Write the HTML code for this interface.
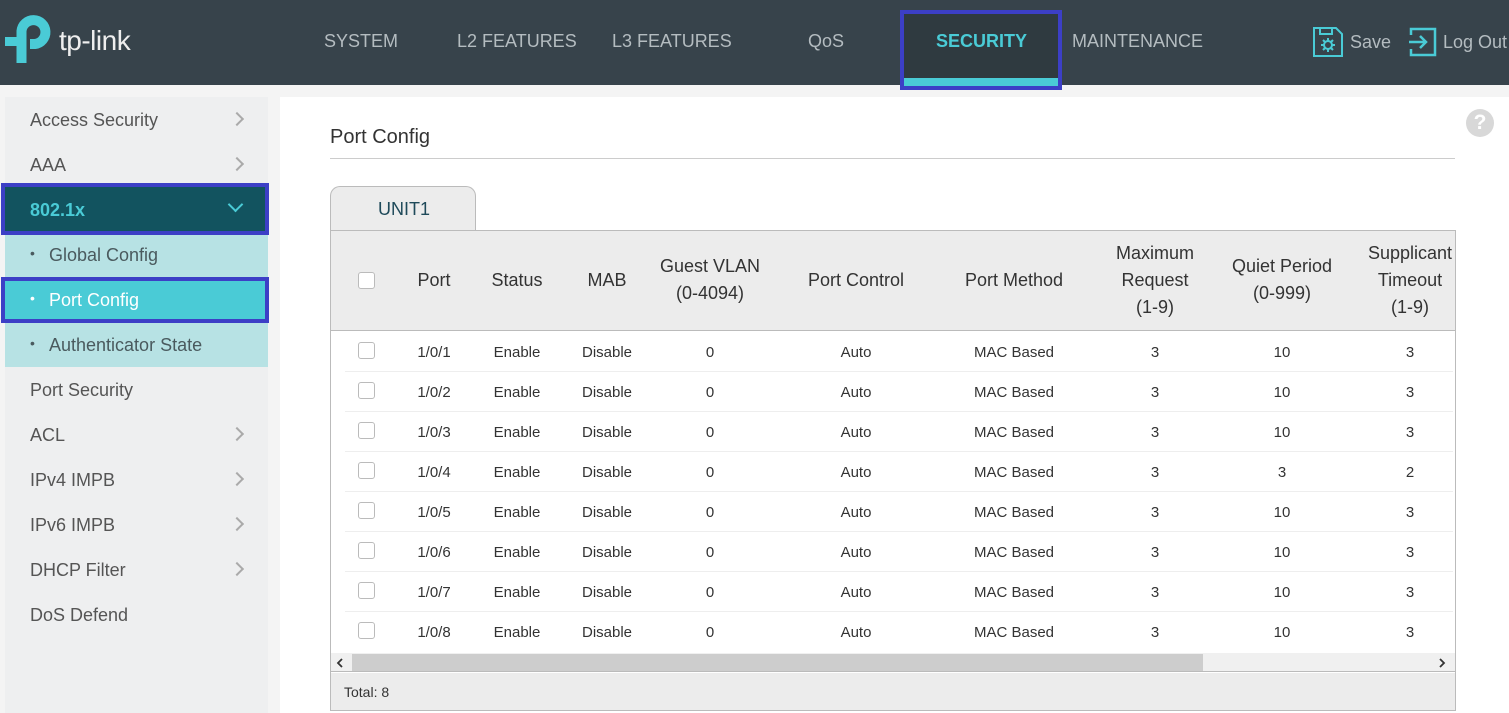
<!DOCTYPE html><html><head><style>
*{box-sizing:border-box;margin:0;padding:0}
body{width:1509px;height:713px;overflow:hidden;background:#f4f4f4;font-family:"Liberation Sans",sans-serif;position:relative}
.a{position:absolute}
.hdr{left:0;top:0;width:1509px;height:85px;background:#37434b}
.nav{top:31px;color:#b4bcc0;font-size:18px}
.side{left:5px;top:97px;width:263px;height:616px;background:#eeeff0}
.si{position:absolute;left:30px;font-size:18px;color:#555}
.chev{position:absolute;left:232px;width:10px;height:10px;border-right:2px solid #aaa;border-top:2px solid #aaa;transform:rotate(45deg)}
.main{left:280px;top:97px;width:1229px;height:616px;background:#fff}
.th{position:absolute;font-size:18px;color:#333;text-align:center;line-height:27px;transform:translateX(-50%);white-space:nowrap}
.td{position:absolute;font-size:15px;color:#333;transform:translateX(-50%)}
.cb{position:absolute;left:358px;width:17px;height:17px;border:1px solid #bbb;border-radius:3px;background:#fff}
.rl{position:absolute;left:345px;width:1108px;height:1px;background:#eee}
</style></head><body>
<div class="a hdr"></div>
<svg class="a" style="left:0;top:0" width="60" height="70" viewBox="0 0 60 70"><path d="M21.5 63 V31 A12 12 0 1 1 35 44 H30" fill="none" stroke="#4acbd6" stroke-width="10"/><rect x="5" y="37" width="20" height="9" fill="#4acbd6"/></svg>
<div class="a" style="left:59px;top:25px;color:#eee;font-size:28px;letter-spacing:-0.5px">tp-link</div>
<div class="a nav" style="left:324px">SYSTEM</div>
<div class="a nav" style="left:457px">L2 FEATURES</div>
<div class="a nav" style="left:612px">L3 FEATURES</div>
<div class="a nav" style="left:808px">QoS</div>
<div class="a" style="left:900px;top:10px;width:162px;height:80px;background:#2f3a40;border:4px solid #3c3fc6"></div>
<div class="a" style="left:904px;top:78px;width:154px;height:8px;background:#4acbd6"></div>
<div class="a nav" style="left:936px;color:#4acbd6;font-weight:bold">SECURITY</div>
<div class="a nav" style="left:1072px">MAINTENANCE</div>
<svg class="a" style="left:1312px;top:26px" width="32" height="32" viewBox="0 0 32 32" fill="none" stroke="#4acbd6" stroke-width="2"><path d="M2 2h22l6 6v22H2z M8 2v6h12V2"/><circle cx="16" cy="19" r="4"/><path d="M16 12v3M16 23v3M9 19h3M20 19h3M11 14l2 2M19 22l2 2M21 14l-2 2M11 24l2-2"/></svg>
<div class="a nav" style="left:1350px;top:32px">Save</div>
<svg class="a" style="left:1408px;top:26px" width="30" height="32" viewBox="0 0 30 32" fill="none" stroke="#4acbd6" stroke-width="2.5"><path d="M3 9V3h24v26H3v-6 M1 16h17 M12 10l6 6-6 6"/></svg>
<div class="a nav" style="left:1443px;top:32px">Log Out</div>

<div class="a side"></div>
<div class="si" style="top:110px">Access Security</div><div class="chev" style="top:114px"></div>
<div class="si" style="top:155px">AAA</div><div class="chev" style="top:159px"></div>
<div class="a" style="left:1px;top:183px;width:268px;height:52px;background:#12535f;border:4px solid #3c3fc6"></div>
<div class="si" style="top:200px;color:#4acbd6;font-weight:bold">802.1x</div>
<div class="a" style="left:230px;top:199px;width:11px;height:11px;border-right:2px solid #4acbd6;border-bottom:2px solid #4acbd6;transform:rotate(45deg)"></div>
<div class="a" style="left:5px;top:235px;width:263px;height:132px;background:#b7e2e4"></div>
<div class="si" style="top:245px;color:#4a5a5e;font-size:14px">•</div><div class="si" style="top:245px;left:49px;color:#4a5a5e">Global Config</div>
<div class="a" style="left:1px;top:277px;width:268px;height:46px;background:#4acbd6;border:4px solid #3c3fc6"></div>
<div class="si" style="top:290px;color:#fff;font-size:14px">•</div><div class="si" style="top:290px;left:49px;color:#fff">Port Config</div>
<div class="si" style="top:335px;color:#4a5a5e;font-size:14px">•</div><div class="si" style="top:335px;left:49px;color:#4a5a5e">Authenticator State</div>
<div class="si" style="top:380px">Port Security</div>
<div class="si" style="top:425px">ACL</div><div class="chev" style="top:429px"></div>
<div class="si" style="top:470px">IPv4 IMPB</div><div class="chev" style="top:474px"></div>
<div class="si" style="top:515px">IPv6 IMPB</div><div class="chev" style="top:519px"></div>
<div class="si" style="top:560px">DHCP Filter</div><div class="chev" style="top:564px"></div>
<div class="si" style="top:605px">DoS Defend</div>

<div class="a main"></div>
<div class="a" style="left:1466px;top:109px;width:28px;height:28px;border-radius:50%;background:#d8d8d8;color:#fff;font-size:21px;font-weight:bold;text-align:center;line-height:28px">?</div>
<div class="a" style="left:330px;top:126px;font-size:20px;color:#333">Port Config</div>
<div class="a" style="left:330px;top:158px;width:1125px;height:1px;background:#ccc"></div>
<div class="a" style="left:330px;top:186px;width:146px;height:46px;background:#ececec;border:1px solid #bbb;border-bottom:none;border-radius:10px 10px 0 0"></div>
<div class="a" style="left:378px;top:199px;font-size:18px;color:#1f4a5a">UNIT1</div>
<div class="a" style="left:330px;top:230px;width:1126px;height:481px;border:1px solid #bbb;background:#fff"></div>
<div class="a" style="left:331px;top:231px;width:1124px;height:100px;background:#ececec;border-bottom:1px solid #bbb"></div>
<div class="cb" style="top:272px"></div>
<div class="th" style="left:434px;top:267px">Port</div>
<div class="th" style="left:517px;top:267px">Status</div>
<div class="th" style="left:607px;top:267px">MAB</div>
<div class="th" style="left:710px;top:253px">Guest VLAN<br>(0-4094)</div>
<div class="th" style="left:856px;top:267px">Port Control</div>
<div class="th" style="left:1014px;top:267px">Port Method</div>
<div class="th" style="left:1155px;top:240px">Maximum<br>Request<br>(1-9)</div>
<div class="th" style="left:1282px;top:253px">Quiet Period<br>(0-999)</div>
<div class="th" style="left:1410px;top:240px">Supplicant<br>Timeout<br>(1-9)</div>
<div id="rows"></div>
<script>
var q=[10,10,10,3,10,10,10,10],s=[3,3,3,2,3,3,3,3],h='';
for(var i=0;i<8;i++){var y=331+i*40;
h+='<div class="cb" style="top:'+(y+11)+'px"></div>';
var v=['1/0/'+(i+1),'Enable','Disable','0','Auto','MAC Based','3',q[i],s[i]],x=[434,517,607,710,856,1014,1155,1282,1410];
for(var j=0;j<9;j++)h+='<div class="td" style="left:'+x[j]+'px;top:'+(y+13)+'px">'+v[j]+'</div>';
if(i<7)h+='<div class="rl" style="top:'+(y+40)+'px"></div>';}
document.getElementById('rows').innerHTML=h;
</script>
<div class="a" style="left:331px;top:653px;width:1124px;height:19px;background:#f0f0f0;border-bottom:1px solid #bbb"></div>
<div class="a" style="left:352px;top:654px;width:851px;height:17px;background:#cdcdcd"></div>
<svg class="a" style="left:335px;top:657px" width="10" height="12"><path d="M7 2L3 6l4 4" fill="none" stroke="#333" stroke-width="1.8"/></svg>
<svg class="a" style="left:1437px;top:657px" width="10" height="12"><path d="M3 2l4 4-4 4" fill="none" stroke="#333" stroke-width="1.8"/></svg>
<div class="a" style="left:331px;top:673px;width:1124px;height:37px;background:#ececec"></div>
<div class="a" style="left:344px;top:684px;font-size:14px;color:#333">Total: 8</div>
</body></html>
